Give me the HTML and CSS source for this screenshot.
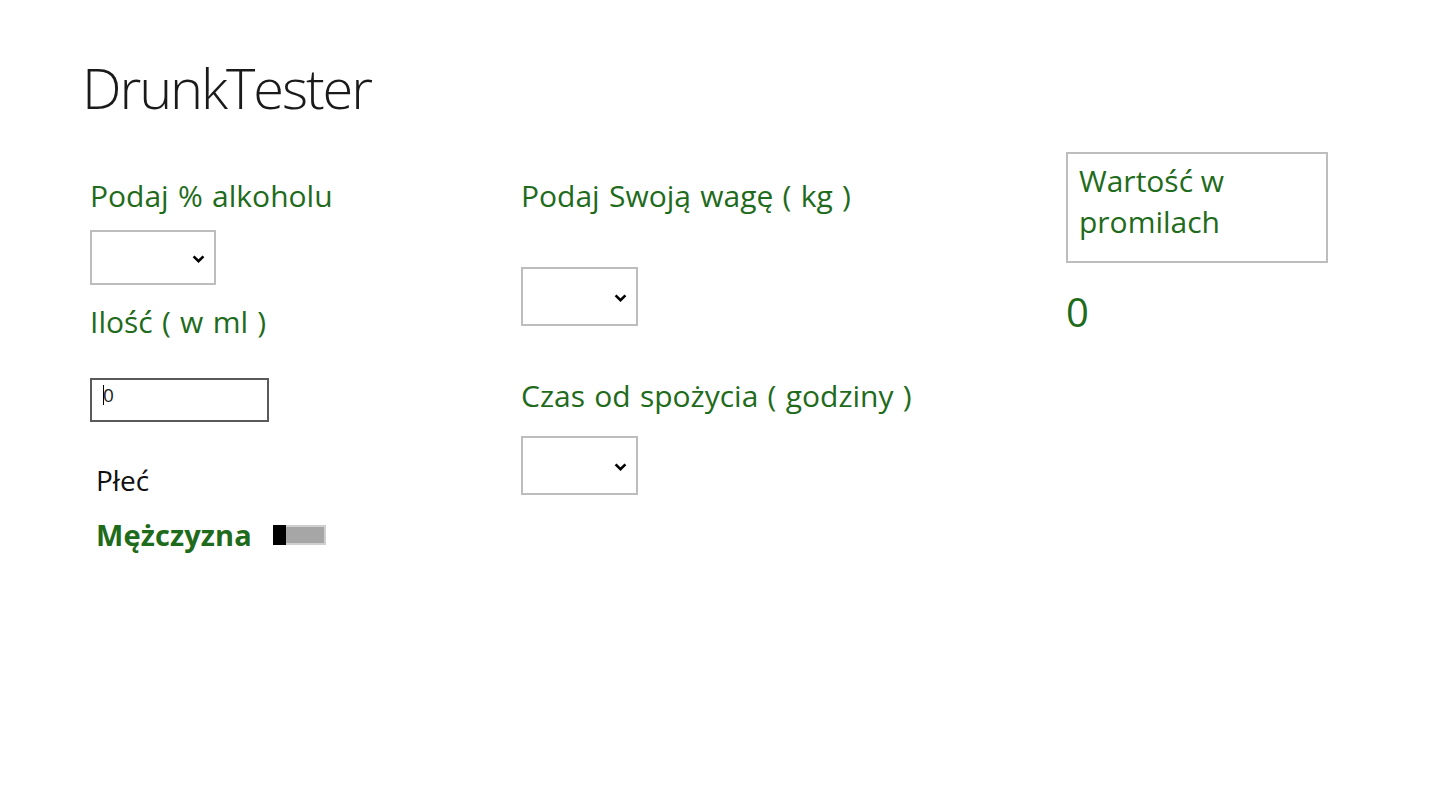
FILE: index.html
```html
<!DOCTYPE html>
<html lang="pl">
<head>
<meta charset="utf-8">
<title>DrunkTester</title>
<link rel="stylesheet" href="styles.css">
</head>
<body>
<div class="app">
  <h1 class="title">DrunkTester</h1>
  <div class="columns">
    <div class="col col-1">
      <div class="label">Podaj % alkoholu</div>
      <div class="select select-small">
        <svg class="chev" width="13" height="8" viewBox="0 0 13 8"><path d="M1.6 1.4 L6.5 6.2 L11.4 1.4" fill="none" stroke="#000" stroke-width="2.6"/></svg>
      </div>
      <div class="label label-ml">Ilość ( w ml )</div>
      <div class="textbox"><span class="tb-text">0</span><span class="caret"></span></div>
      <div class="plec">Płeć</div>
      <div class="gender-row">
        <span class="gender">Mężczyzna</span>
        <span class="toggle"><span class="thumb"></span><span class="track"></span></span>
      </div>
    </div>
    <div class="col col-2">
      <div class="label">Podaj Swoją wagę ( kg )</div>
      <div class="select select-big sel-waga">
        <svg class="chev" width="13" height="8" viewBox="0 0 13 8"><path d="M1.6 1.4 L6.5 6.2 L11.4 1.4" fill="none" stroke="#000" stroke-width="2.6"/></svg>
      </div>
      <div class="label label-czas">Czas od spożycia ( godziny )</div>
      <div class="select select-big sel-czas">
        <svg class="chev" width="13" height="8" viewBox="0 0 13 8"><path d="M1.6 1.4 L6.5 6.2 L11.4 1.4" fill="none" stroke="#000" stroke-width="2.6"/></svg>
      </div>
    </div>
    <div class="col col-3">
      <div class="result-box">Wartość w<br>promilach</div>
      <div class="result-value">0</div>
    </div>
  </div>
</div>
</body>
</html>
```
FILE: styles.css
```css
html, body {
  margin: 0;
  padding: 0;
  background: #ffffff;
}
body {
  width: 1440px;
  height: 810px;
  overflow: hidden;
  font-family: "Open Sans", "Noto Sans", sans-serif;
}
.app {
  padding-top: 51px;
}
.title {
  margin: 0 0 0 82px;
  font-weight: 300;
  font-size: 56px;
  line-height: 72px;
  letter-spacing: -2.1px;
  color: #1a1a1a;
}
.columns {
  display: flex;
  margin-top: 33px;
}
.col {
  display: flex;
  flex-direction: column;
  align-items: flex-start;
}
.col-1 {
  margin-left: 90px;
  width: 431px;
}
.col-2 {
  width: 545px;
}
.col-3 {
  width: 262px;
}
.label {
  font-size: 30px;
  line-height: 36px;
  word-spacing: 1.5px;
  color: #1f6b1c;
  margin-top: 22px;
  white-space: nowrap;
}
.select {
  box-sizing: border-box;
  border: 2px solid #bdbdbd;
  background: #fff;
  position: relative;
}
.select .chev {
  position: absolute;
  right: 9px;
  top: 50%;
  margin-top: -3px;
}
.select-small {
  width: 126px;
  height: 55px;
  margin-top: 16px;
}
.select-big {
  width: 117px;
  height: 59px;
}
.sel-waga {
  margin-top: 53px;
}
.sel-czas {
  margin-top: 22px;
}
.label-ml {
  margin-top: 19px;
}
.label-czas {
  margin-top: 52px;
}
.textbox {
  box-sizing: border-box;
  width: 179px;
  height: 44px;
  border: 2px solid #5a5a5a;
  margin-top: 38px;
  position: relative;
  font-size: 19px;
  line-height: 24px;
  color: #222;
  padding: 3px 0 0 11px;
}
.tb-text {
  display: inline-block;
}
.caret {
  position: absolute;
  left: 11px;
  top: 5px;
  width: 1px;
  height: 20px;
  background: #000;
}
.plec {
  margin-top: 40px;
  margin-left: 6px;
  font-size: 28px;
  line-height: 36px;
  color: #111;
}
.gender-row {
  display: flex;
  align-items: center;
  margin-top: 19px;
  margin-left: 6px;
}
.gender {
  font-size: 29px;
  font-weight: 700;
  line-height: 36px;
  color: #1f6b1c;
  letter-spacing: 0.1px;
}
.toggle {
  display: flex;
  margin-left: 21px;
  width: 53px;
  height: 20px;
}
.thumb {
  width: 13px;
  height: 20px;
  background: #000;
}
.track {
  flex: 1;
  box-sizing: border-box;
  height: 20px;
  background: #a6a6a6;
  border: 2px solid #cfcfcf;
  border-left: none;
}
.result-box {
  box-sizing: border-box;
  width: 262px;
  height: 111px;
  border: 2px solid #bdbdbd;
  margin-top: -4px;
  padding: 6px 10px 0 11px;
  font-size: 30px;
  line-height: 41px;
  color: #1f6b1c;
}
.result-value {
  margin-top: 24px;
  font-size: 40px;
  line-height: 50px;
  color: #1f6b1c;
}
```
